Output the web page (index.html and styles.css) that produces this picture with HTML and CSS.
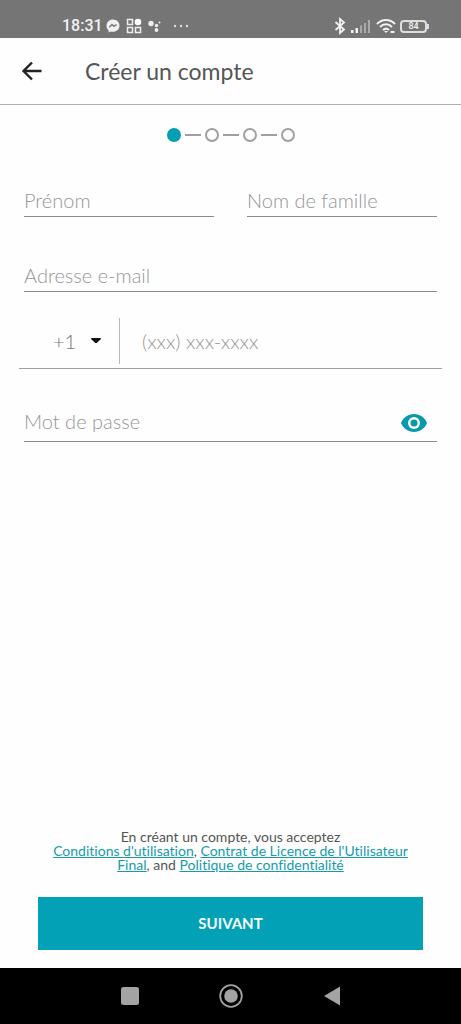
FILE: index.html
```html
<!DOCTYPE html>
<html lang="fr">
<head>
<meta charset="utf-8">
<meta name="viewport" content="width=device-width, initial-scale=1">
<title>Créer un compte</title>
<link rel="stylesheet" href="styles.css">
</head>
<body>
<div class="status-bar">
  <div class="status-left">
    <span class="clock">18:31</span>
    <div class="status-icons">
      <svg width="14" height="14" viewBox="0 0 14 14"><path d="M7 .5C3.300.5.5 3.200.5 6.700c0 1.900.8 3.500 2.100 4.600V13.500l2-1.100c.7.200 1.500.3 2.400.3 3.700 0 6.500-2.600 6.500-6S10.700.5 7 .5z" fill="#f2f2f2"/><path d="M3.300 8.300 6 5.500l2 1.800 2.700-1.800" fill="none" stroke="#777" stroke-width="1.400"/></svg>
      <svg width="16" height="16" viewBox="0 0 16 16" fill="none" stroke="#eee" stroke-width="1.500"><rect x="1.500" y="1.500" width="5" height="5"/><rect x="1.500" y="9.500" width="5" height="5"/><rect x="9.500" y="9.500" width="5" height="5"/><circle cx="12" cy="4" r="3.300" fill="#fff" stroke="none"/></svg>
      <svg width="14" height="14" viewBox="0 0 14 14" fill="#eee"><circle cx="3" cy="4.500" r="2.700"/><circle cx="8.500" cy="6.500" r="1.700"/><circle cx="11.500" cy="3.500" r="1"/><circle cx="8.500" cy="11" r="1.900"/></svg>
      <svg class="more" width="18" height="14" viewBox="0 0 18 14" fill="#ddd"><circle cx="3" cy="7" r="1.200"/><circle cx="9" cy="7" r="1.200"/><circle cx="15" cy="7" r="1.200"/></svg>
    </div>
  </div>
  <div class="status-right">
    <svg width="12" height="18" viewBox="0 0 12 18" fill="none" stroke="#f2f2f2" stroke-width="1.800"><path d="M1.500 5l8.500 7.500L6 16V2l4 3.500L1.500 13"/></svg>
    <svg width="22" height="16" viewBox="0 0 22 16"><path d="M1 12h2.500v3H1zM5.500 10H8v5H5.500z" fill="#f2f2f2"/><path d="M10 7.500h2V15h-2zM14 5h2v10h-2zM18 2h2v13h-2z" fill="#aaa"/></svg>
    <svg width="20" height="16" viewBox="0 0 20 16" fill="none" stroke="#f2f2f2" stroke-width="2"><path d="M1 6c5-5.300 13-5.300 18 0M4 9c3.500-3.600 8.500-3.600 12 0M7 12c2-1.800 4-1.800 6 0"/><path d="M8 13l2 2 2-2z" fill="#f2f2f2" stroke="none"/><path d="M14.500 14h4" stroke-width="2"/></svg>
    <div class="battery"><span>84</span></div>
  </div>
</div>

<header class="app-bar">
  <button class="back" type="button" aria-label="Retour">
    <svg width="24" height="24" viewBox="0 0 24 24" fill="none" stroke="#222" stroke-width="2.400"><path d="M21.500 12H4M12 3.500 3.500 12l8.500 8.500"/></svg>
  </button>
  <h1>Créer un compte</h1>
</header>

<form class="form">
  <ol class="stepper" aria-label="Étapes">
    <li class="dot active"></li><li class="dash"></li>
    <li class="dot"></li><li class="dash"></li>
    <li class="dot"></li><li class="dash"></li>
    <li class="dot"></li>
  </ol>

  <div class="names">
    <input class="field" type="text" aria-label="Prénom" placeholder="Prénom">
    <input class="field" type="text" aria-label="Nom de famille" placeholder="Nom de famille">
  </div>
  <input class="field email" type="email" aria-label="Adresse e-mail" placeholder="Adresse e-mail">

  <div class="phone">
    <div class="code">
      <select aria-label="Indicatif"><option>+1</option><option>+33</option></select>
      <svg width="10" height="6" viewBox="0 0 10 6"><path d="M0 1Q0 0 1 0h8q1 0 1 1L6 4.800q-1 .8-2 0z" fill="#111"/></svg>
    </div>
    <input type="tel" aria-label="Téléphone" placeholder="(xxx) xxx-xxxx">
  </div>

  <div class="password">
    <input class="field" type="password" aria-label="Mot de passe" placeholder="Mot de passe">
    <button type="button" aria-label="Afficher le mot de passe">
      <svg width="26" height="18" viewBox="0 0 26 18"><path d="M13 0C7 0 2.200 3.700 0 9c2.200 5.300 7 9 13 9s10.800-3.700 13-9C23.800 3.700 19 0 13 0z" fill="#0899aa"/><circle cx="13" cy="9" r="6" fill="#fff"/><circle cx="13" cy="9" r="3.500" fill="#0899aa"/></svg>
    </button>
  </div>

  <p class="terms">En créant un compte, vous acceptez<br><a href="#">Conditions d'utilisation</a>, <a href="#">Contrat de Licence de l'Utilisateur Final</a>, and <a href="#">Politique de confidentialité</a></p>
  <button class="next" type="submit">SUIVANT</button>
</form>

<nav class="system-nav" aria-label="Système">
  <button type="button" aria-label="Applications récentes"><svg width="24" height="24" viewBox="0 0 24 24"><rect x="3" y="3" width="18" height="18" rx="2.500" fill="#a3a3a3"/></svg></button>
  <button type="button" aria-label="Accueil"><svg width="24" height="24" viewBox="0 0 24 24"><circle cx="12" cy="12" r="10.800" fill="none" stroke="#a3a3a3" stroke-width="1.800"/><circle cx="12" cy="12" r="6.800" fill="#a3a3a3"/></svg></button>
  <button type="button" aria-label="Retour système"><svg width="24" height="24" viewBox="0 0 24 24"><path d="M20 2.500v19L4 12z" fill="#a3a3a3"/></svg></button>
</nav>
</body>
</html>
```
FILE: styles.css
```css
* { box-sizing: border-box; }

body {
  margin: 0;
  min-height: 100vh;
  display: flex;
  flex-direction: column;
  background: #fefefe;
  color: #555;
  font-family: Lato, "Open Sans", sans-serif;
  font-variant-ligatures: none;
}

svg { display: block; flex: none; }
button { border: 0; padding: 0; background: none; font: inherit; }

.status-bar {
  display: flex;
  justify-content: space-between;
  height: 38px;
  padding: 14px 32px 0 62px;
  background: #757575;
  color: #f2f2f2;
}
.status-left, .status-right, .status-icons { display: flex; align-items: center; height: 24px; }
.status-left { gap: 3px; }
.status-icons { gap: 6px; }
.status-right { gap: 4px; }
.clock { font: 500 16px/24px Roboto, sans-serif; }
.more { margin-left: 4px; }
.battery { display: flex; align-items: center; }
.battery span {
  width: 27px;
  height: 13px;
  border: 2px solid #ddd;
  border-radius: 4px;
  font: 500 9px/9px Roboto, sans-serif;
  text-align: center;
}
.battery::after { content: ""; width: 2px; height: 5px; background: #ddd; }

.app-bar {
  display: flex;
  align-items: center;
  gap: 41px;
  height: 67px;
  padding: 0 20px;
  border-bottom: 1px solid #b0b0b0;
}
.app-bar h1 { margin: 0; font-size: 23px; line-height: 28px; font-weight: 400; }

.form { flex: 1; display: flex; flex-direction: column; padding: 23px 24px 18px; }

.stepper {
  display: flex;
  justify-content: center;
  align-items: center;
  gap: 4px;
  margin: 0;
  padding: 0;
  list-style: none;
}
.dot { width: 14px; height: 14px; border: 2px solid #a0a0a0; border-radius: 50%; }
.dot.active { border-color: #049eb2; background: #049eb2; }
.dash { width: 16px; height: 2px; background: #a0a0a0; }

input, select {
  width: 100%;
  min-width: 0;
  margin: 0;
  padding: 0;
  border: 0;
  border-radius: 0;
  outline: 0;
  background: transparent;
  color: #777;
  font: 300 20px/24px Lato, "Open Sans", sans-serif;
}
input::placeholder { color: #969696; opacity: 1; }
.field { height: 34px; border-bottom: 1px solid #8c8c8c; }

.names { display: grid; grid-template-columns: 1fr 1fr; gap: 33px; margin-top: 41px; }
.email { margin-top: 41px; }

.phone {
  display: flex;
  align-items: center;
  height: 57px;
  margin: 20px -5px 0;
  padding-top: 1px;
  border-bottom: 1px solid #a0a0a0;
}
.code {
  display: flex;
  align-items: center;
  flex: none;
  width: 101px;
  height: 46px;
  padding: 0 18px 0 34px;
  border-right: 1px solid #bbb;
}
.code select { appearance: none; }
.phone input { padding-left: 22px; }

.password {
  display: grid;
  margin-top: 34px;
}
.password > * { grid-area: 1 / 1; }
.password .field { height: 39px; padding-bottom: 2px; }
.password button { place-self: center end; margin-right: 10px; }

.terms {
  margin: auto 24px 25px;
  font-size: 14px;
  line-height: 14px;
  text-align: center;
}
.terms a { color: #159cab; text-decoration: underline; }

.next {
  height: 53px;
  margin: 0 14px;
  padding-bottom: 2px;
  background: #02a1b6;
  color: #f4feff;
  font-size: 15px;
  font-weight: 700;
}

.system-nav {
  display: flex;
  justify-content: center;
  align-items: center;
  gap: 77px;
  height: 56px;
  background: #000;
}
```
